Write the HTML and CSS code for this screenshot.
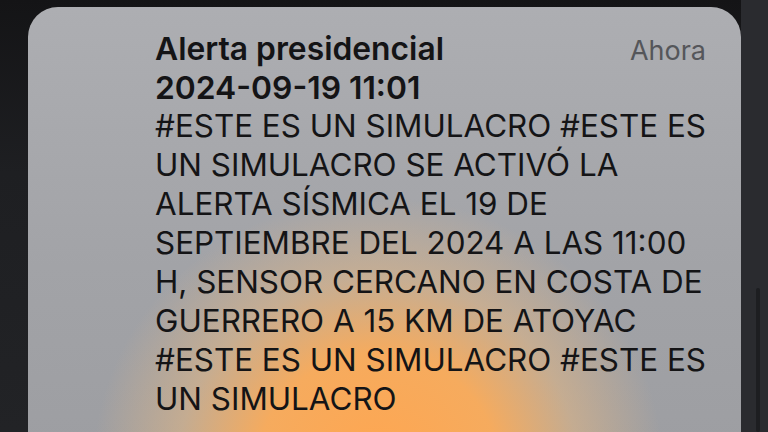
FILE: index.html
```html
<!DOCTYPE html>
<html lang="es">
<head>
    <meta charset="UTF-8">
    <meta name="viewport" content="width=device-width, initial-scale=1.0">
    <title>Alerta presidencial</title>
    <link rel="stylesheet" href="styles.css">
</head>
<body>
<div id="screen">
    <div id="notification">
        <div class="notification-body">
            <div class="notification-header">
                <h1 class="title">Alerta presidencial</h1>
                <span class="time">Ahora</span>
            </div>
            <div class="date">2024-09-19 11:01</div>
            <p class="message">
                #ESTE ES UN SIMULACRO #ESTE ES<br>
                UN SIMULACRO SE ACTIVÓ LA<br>
                ALERTA SÍSMICA EL 19 DE<br>
                SEPTIEMBRE DEL 2024 A LAS 11:00<br>
                H, SENSOR CERCANO EN COSTA DE<br>
                GUERRERO A 15 KM DE ATOYAC<br>
                #ESTE ES UN SIMULACRO #ESTE ES<br>
                UN SIMULACRO
            </p>
        </div>
    </div>
    <div id="side">
        <div class="scroll-bar"></div>
    </div>
</div>
</body>
</html>
```

FILE: styles.css
```css
html, body {
    margin: 0;
    padding: 0;
    height: 100%;
    overflow: hidden;
}

body {
    font-family: Inter, "Noto Sans", sans-serif;
    background: linear-gradient(180deg, #141416 0%, #1e1f22 40%, #222326 100%);
}

#screen {
    display: flex;
    height: 100%;
    padding-top: 7px;
    box-sizing: border-box;
}

#notification {
    margin-left: 28px;
    width: 713px;
    height: 520px;
    flex-shrink: 0;
    border-radius: 30px;
    background-color: #a3a4a8;
    background-image:
        radial-gradient(ellipse 285px 270px at 350px 460px, rgba(255, 166, 80, 1) 0%, rgba(253, 172, 88, 0.92) 42%, rgba(238, 186, 126, 0.48) 70%, rgba(220, 190, 150, 0) 100%),
        linear-gradient(180deg, #adaeb2 0%, #a2a3a7 50%, #9b9ca0 100%);
    overflow: hidden;
}

.notification-body {
    padding: 22px 35px 0 127px;
    color: #141416;
}

.notification-header {
    display: flex;
    justify-content: space-between;
    align-items: baseline;
}

.title {
    margin: 0;
    font-size: 31.8px;
    font-weight: 600;
    line-height: 39px;
}

.time {
    font-size: 27px;
    color: #55565a;
}

.date {
    font-size: 31.8px;
    font-weight: 600;
    line-height: 39px;
}

.message {
    margin: 0;
    font-size: 31.4px;
    line-height: 39px;
}

#side {
    flex-grow: 1;
    background-color: #2a2b2f;
    margin-top: -7px;
    display: flex;
    justify-content: center;
}

.scroll-bar {
    width: 4px;
    margin-top: 288px;
    margin-left: 6px;
    background-color: #1d1e21;
    border-radius: 2px;
}
```
